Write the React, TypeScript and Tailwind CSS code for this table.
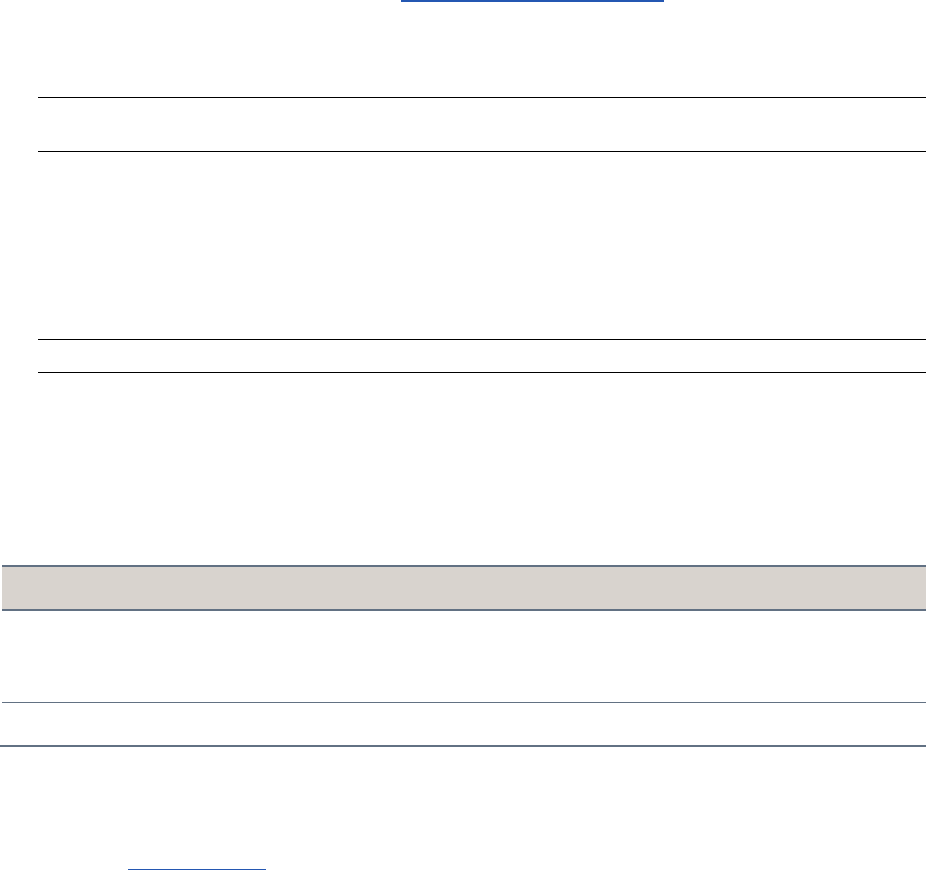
export default function App() {
  return (
    <div className="min-h-[870px] w-[926px] bg-white font-['Liberation_Sans',sans-serif] text-white">
      {/* top link underline */}
      <div className="ml-[401px] h-[2px] w-[263px] bg-[#2457b2]" />

      {/* first ruled block */}
      <div className="ml-[38px] mt-[95px] h-[55px] border-y border-black" />

      {/* second ruled block */}
      <div className="ml-[38px] mt-[187px] h-[34px] border-y border-black" />

      {/* table */}
      <div className="mt-[192px] border-b-2 border-[#627183]">
        <div className="ml-[2px]">
          <div className="h-[46px] border-y-2 border-[#627183] bg-[#d8d3ce]" />
          <div className="h-[92px] border-b border-[#627183]" />
          <div className="h-[42px]" />
        </div>
      </div>

      {/* bottom link underline */}
      <div className="ml-[128px] mt-[122px] h-px w-[138px] bg-[#2457b2]" />
    </div>
  );
}
